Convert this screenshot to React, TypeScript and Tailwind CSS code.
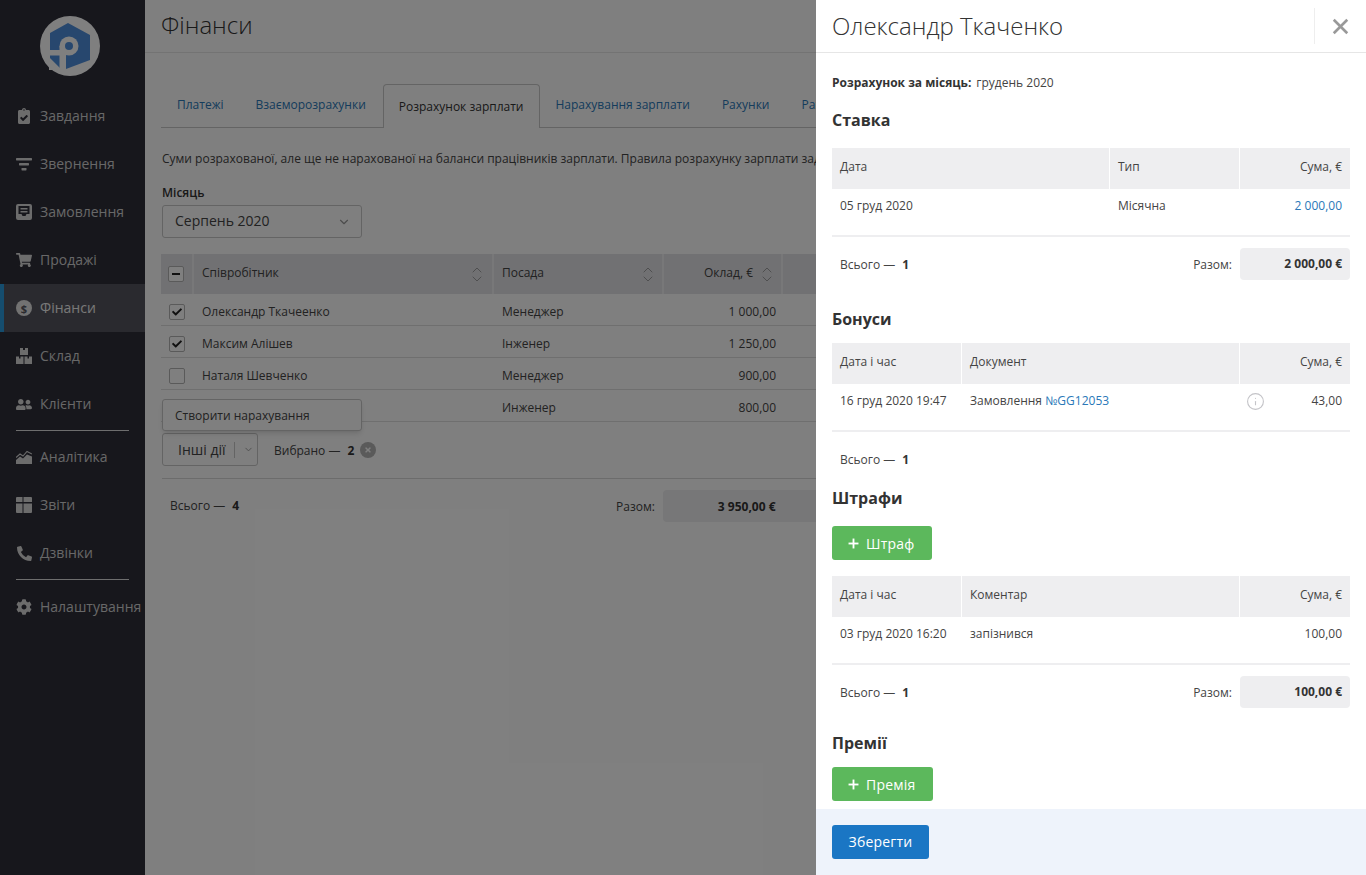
import React from "react";
import { FaCheck, FaClipboardCheck, FaCog, FaPhoneAlt, FaShoppingCart, FaTimes, FaUserFriends } from "react-icons/fa";
import { ChevronDown, ChevronUp, Info, Plus, X } from "lucide-react";

const font = "font-['Open_Sans','Noto_Sans',sans-serif]";

// Drawn icons: the icon sets have nothing close for these
function FunnelIcon() {
  return (
    <svg width="16" height="16" viewBox="0 0 16 16" fill="currentColor">
      <rect x="0" y="2" width="16" height="2.4" rx="0.6" />
      <rect x="3" y="7" width="10" height="2.4" rx="0.6" />
      <rect x="5.5" y="12" width="5" height="2.4" rx="0.6" />
    </svg>
  );
}

function TrayIcon() {
  return (
    <svg width="16" height="16" viewBox="0 0 16 16" fill="currentColor">
      <path
        fillRule="evenodd"
        d="M2 0h12a2 2 0 0 1 2 2v12a2 2 0 0 1-2 2H2a2 2 0 0 1-2-2V2a2 2 0 0 1 2-2zm.5 2v8h3l1 2h3l1-2h3V2h-11zM4.500 4h7v1.500h-7V4zm0 3h7v1.500h-7V7z"
      />
    </svg>
  );
}

function BoxesIcon() {
  return (
    <svg width="16" height="16" viewBox="0 0 16 16" fill="currentColor">
      <path
        fillRule="evenodd"
        d="M4 0h8v7H4V0zm3 0v2h2V0H7zM0 8.500h7.500V16H0V8.500zm3 0v2h1.500v-2H3zM8.500 8.500H16V16H8.500V8.500zm3 0v2H13v-2h-1.500z"
      />
    </svg>
  );
}

function AreaIcon() {
  return (
    <svg width="16" height="16" viewBox="0 0 16 16" fill="currentColor">
      <path d="M0 15V11l4-3.500 3 2 4-4 5 2V15H0z" />
      <path d="M0 8.500l4-3.500 3 2 4-4.500 5 2.500" fill="none" stroke="currentColor" strokeWidth="1.100" />
    </svg>
  );
}

function GridIcon() {
  return (
    <svg width="16" height="16" viewBox="0 0 16 16" fill="currentColor">
      <path d="M1 0h5.500v5H0V1a1 1 0 0 1 1-1zM7.500 0H15a1 1 0 0 1 1 1v4H7.500V0zM0 6.500h6.500V16H1a1 1 0 0 1-1-1V6.500zM7.500 6.500H16V15a1 1 0 0 1-1 1H7.500V6.500z" />
    </svg>
  );
}

function DollarBadge() {
  return (
    <span className="flex h-4 w-4 items-center justify-center rounded-full bg-[#e4e4e4] text-[11px] leading-none font-bold text-[#55555e]">
      $
    </span>
  );
}

function Logo() {
  return (
    <svg width="60" height="60" viewBox="0 0 60 60">
      <circle cx="30" cy="30" r="30" fill="#ffffff" />
      <path d="M28 7l22 12v25L26 53H20L10 47V17z" fill="#4f8fdc" />
      <path d="M9 34h11v5.500H9zM9 41l11 11v2H9z" fill="#ffffff" />
      <circle cx="29" cy="30" r="9.500" fill="#ffffff" />
      <rect x="19.500" y="30" width="6.500" height="24" fill="#ffffff" />
      <circle cx="29" cy="30" r="4" fill="#4f8fdc" />
    </svg>
  );
}

const navTop = [
  { label: "Завдання", icon: <FaClipboardCheck size={16} /> },
  { label: "Звернення", icon: <FunnelIcon /> },
  { label: "Замовлення", icon: <TrayIcon /> },
  { label: "Продажі", icon: <FaShoppingCart size={16} /> },
  { label: "Фінанси", icon: <DollarBadge />, active: true },
  { label: "Склад", icon: <BoxesIcon /> },
  { label: "Клієнти", icon: <FaUserFriends size={17} /> },
];

const navMiddle = [
  { label: "Аналітика", icon: <AreaIcon /> },
  { label: "Звіти", icon: <GridIcon /> },
  { label: "Дзвінки", icon: <FaPhoneAlt size={15} /> },
];

function NavItem({ label, icon, active }: { label: string; icon: React.ReactNode; active?: boolean }) {
  return (
    <div
      className={`flex h-12 items-center border-l-4 pl-3 text-[14px] whitespace-nowrap ${
        active ? "border-[#2a9bdc] bg-[#55555e] text-[#f0f0f0]" : "border-transparent text-[#d0d0d0]"
      }`}
    >
      <span className="flex w-4 justify-center text-[#d8d8d8]">{icon}</span>
      <span className="ml-2 pb-[2px]">{label}</span>
    </div>
  );
}

function Sidebar() {
  return (
    <aside className="h-full w-[145px] shrink-0 bg-[#2e2e38]">
      <div className="h-[92px] pt-4 pl-10">
        <Logo />
      </div>
      {navTop.map((item) => (
        <NavItem key={item.label} {...item} />
      ))}
      <div className="mx-4 mt-[2px] mb-[2px] h-px bg-[#dcdcdc]" />
      {navMiddle.map((item) => (
        <NavItem key={item.label} {...item} />
      ))}
      <div className="mx-4 mt-[2px] mb-[3px] h-px bg-[#dcdcdc]" />
      <NavItem label="Налаштування" icon={<FaCog size={16} />} />
    </aside>
  );
}

function SortIcon() {
  return (
    <span className="flex flex-col items-center text-[#9a9a9a]">
      <ChevronUp size={16} strokeWidth={1.4} className="-mb-1" />
      <ChevronDown size={16} strokeWidth={1.4} className="-mt-[3px]" />
    </span>
  );
}

function Checkbox({ state }: { state?: "on" | "mixed" }) {
  return (
    <span className="flex h-4 w-4 items-center justify-center rounded-[2px] border border-[#b5b5b5] bg-white text-[#222]">
      {state === "on" && <FaCheck size={10} />}
      {state === "mixed" && <span className="h-[2px] w-2 bg-[#222]" />}
    </span>
  );
}

const tabs = ["Платежі", "Взаєморозрахунки", "Розрахунок зарплати", "Нарахування зарплати", "Рахунки", "Рахунки-фактури"];

const employees = [
  { name: "Олександр Ткачеенко", role: "Менеджер", pay: "1 000,00", state: "on" as const },
  { name: "Максим Алішев", role: "Інженер", pay: "1 250,00", state: "on" as const },
  { name: "Наталя Шевченко", role: "Менеджер", pay: "900,00" },
  { name: "", role: "Инженер", pay: "800,00", hidden: true },
];

function FinancePage() {
  return (
    <main className="relative h-full min-w-0 flex-1 overflow-hidden bg-white text-[12px] text-[#444]">
      <div className="flex h-[53px] items-center border-b border-[#e6e6e6] pl-4">
        <h1 className="pb-[3px] text-[24px] font-light text-[#333]">Фінанси</h1>
      </div>

      <div className="mt-[31px] ml-4 flex h-11 w-[1300px] items-end border-b border-[#c9c9c9]">
        {tabs.map((tab) => (
          <div
            key={tab}
            className={
              tab === "Розрахунок зарплати"
                ? "-mb-px ml-px flex h-11 items-center rounded-t-[4px] border border-b-0 border-[#c9c9c9] bg-white px-[15px] text-[#333] whitespace-nowrap"
                : "flex h-11 items-center px-4 text-[#2a78b8] whitespace-nowrap"
            }
          >
            {tab}
          </div>
        ))}
      </div>

      <p className="mt-[22px] ml-[17px] w-[1200px] leading-[18px] whitespace-nowrap">
        Суми розрахованої, але ще не нарахованої на баланси працівників зарплати. Правила розрахунку зарплати задаються в налаштуваннях.
      </p>

      <div className="mt-4 ml-[17px] leading-[18px] font-semibold text-[#333]">Місяць</div>
      <div className="mt-[3px] ml-[17px] flex h-[33px] w-[200px] items-center justify-between rounded-[3px] border border-[#c9c9c9] pr-[10px] pl-3 text-[14px] text-[#444]">
        <span className="pb-[2px]">Серпень 2020</span>
        <ChevronDown size={14} className="text-[#999]" />
      </div>

      <div className="mt-4 ml-4 w-[1200px]">
        <div className="flex h-10 items-stretch bg-[#e2e2e6] text-[#444]">
          <div className="flex w-[33px] items-center justify-center border-r-2 border-white/50 pr-px">
            <Checkbox state="mixed" />
          </div>
          <div className="flex w-[300px] items-center justify-between border-r-2 border-white/50 pr-[7px] pl-2">
            <span className="pb-[2px]">Співробітник</span>
            <SortIcon />
          </div>
          <div className="flex w-[170px] items-center justify-between border-r-2 border-white/50 pr-[6px] pl-2">
            <span className="pb-[2px]">Посада</span>
            <SortIcon />
          </div>
          <div className="flex w-[119px] items-center justify-end gap-[6px] border-r-2 border-white/50 pr-[6px]">
            <span className="pb-[2px]">Оклад, €</span>
            <SortIcon />
          </div>
        </div>
        {employees.map((row, i) => (
          <div key={i} className="flex h-8 items-center border-b border-[#dedede] pt-1 first:mt-[1px]">
            <div className="flex w-[33px] justify-center pr-px">{!row.hidden && <Checkbox state={row.state} />}</div>
            <div className="w-[300px] pl-2">{row.name}</div>
            <div className="w-[170px] pl-2">{row.role}</div>
            <div className="w-[119px] pr-[7px] text-right">{row.pay}</div>
          </div>
        ))}
      </div>

      <div className="absolute top-[399px] left-[17px] flex h-8 w-[200px] items-center rounded-[3px] border border-[#c9c9c9] bg-white pt-[2px] pl-3 shadow-md">
        Створити нарахування
      </div>

      <div className="mt-[11px] ml-[17px] flex items-center">
        <div className="flex h-[33px] w-[96px] items-center rounded-[3px] border border-[#c9c9c9] pl-[15px] text-[14px]">
          Інші дії
          <span className="mx-[8px] h-4 w-px bg-[#c9c9c9]" />
          <ChevronDown size={11} className="text-[#999]" />
        </div>
        <span className="ml-4 pt-[2px]">Вибрано —</span>
        <b className="ml-[7px] pt-[2px] font-bold text-[#333]">2</b>
        <span className="ml-[6px] flex h-4 w-4 items-center justify-center rounded-full bg-[#b4b4b4] text-white">
          <FaTimes size={8} />
        </span>
      </div>

      <div className="mt-[12px] ml-[17px] w-[1200px] border-t border-[#d8d8d8] pt-[11px]">
        <div className="flex h-8 items-center pl-2">
          <div className="w-[446px] pb-[1px]">
            <span>Всього —</span>
            <b className="ml-[7px] font-bold text-[#333]">4</b>
          </div>
          <span className="pt-[2px]">Разом:</span>
          <div className="ml-2 flex h-8 w-[400px] items-center rounded-[4px] bg-[#eeeef0] pt-[2px] pl-[55px] font-bold text-[#333]">3 950,00 €</div>
        </div>
      </div>
    </main>
  );
}

type Cell = React.ReactNode;

function DetailTable({ columns, head, row }: { columns: string[]; head: string[]; row: Cell[] }) {
  return (
    <div>
      <div className="flex h-[41px] gap-[1px]">
        {head.map((title, i) => (
          <div
            key={title}
            className={`${columns[i]} flex items-center bg-[#eeeef0] px-2 pb-[3px] ${i === head.length - 1 ? "justify-end" : ""}`}
          >
            {title}
          </div>
        ))}
      </div>
      <div className="flex h-[46px] gap-[1px] pt-2 leading-[18px]">
        {row.map((cell, i) => (
          <div key={i} className={`${columns[i]} px-2 ${i === row.length - 1 ? "text-right" : ""}`}>
            {cell}
          </div>
        ))}
      </div>
      <div className="h-[2px] bg-[#eeeef0]" />
    </div>
  );
}

function Totals({ count, sum }: { count: number; sum?: string }) {
  return (
    <div className="mt-[11px] flex h-8 items-center pl-2">
      <span className="pt-[2px]">Всього —</span>
      <b className="ml-[7px] pt-[2px] font-bold text-[#333]">{count}</b>
      {sum && (
        <>
          <span className="mr-2 ml-auto pt-[2px]">Разом:</span>
          <div className="flex h-8 w-[110px] items-center justify-end rounded-[4px] bg-[#eeeef0] px-2 font-bold text-[#333]">{sum}</div>
        </>
      )}
    </div>
  );
}

function AddButton({ label, width }: { label: string; width: string }) {
  return (
    <div className={`${width} flex h-[34px] items-center gap-1 rounded-[3px] bg-[#5cb85c] pl-[13px] text-[14px] font-medium tracking-[0.2px] text-white`}>
      <Plus size={17} strokeWidth={2.600} strokeLinecap="butt" />
      {label}
    </div>
  );
}

const wideDate = ["w-[277px]", "w-[129px]", "w-[110px]"];
const narrowDate = ["w-[129px]", "w-[277px]", "w-[110px]"];

function SalaryDrawer() {
  return (
    <aside className="absolute top-0 right-0 bottom-0 flex w-[550px] flex-col bg-white text-[12px] text-[#444]">
      <div className="flex h-[53px] shrink-0 items-center justify-between border-b border-[#e6e6e6]">
        <h2 className="pb-[1px] pl-4 text-[24px] font-light text-[#333]">Олександр Ткаченко</h2>
        <div className="flex h-9 w-[52px] items-center justify-center border-l border-[#eeeeee] text-[#999]">
          <X size={27} strokeWidth={2.300} strokeLinecap="butt" />
        </div>
      </div>

      <div className="min-h-0 flex-1 overflow-hidden px-4">
        <div className="mt-[21px] leading-[18px]">
          <b className="font-bold text-[#333]">Розрахунок за місяць:</b>
          <span className="ml-[5px]">грудень 2020</span>
        </div>

        <h3 className="mt-4 mb-4 text-[16px] leading-6 font-bold text-[#333]">Ставка</h3>
        <DetailTable
          columns={wideDate}
          head={["Дата", "Тип", "Сума, €"]}
          row={["05 груд 2020", "Місячна", <span className="text-[#2a78b8]">2 000,00</span>]}
        />
        <Totals count={1} sum="2 000,00 €" />

        <h3 className="mt-[27px] mb-3 text-[16px] leading-6 font-bold text-[#333]">Бонуси</h3>
        <DetailTable
          columns={narrowDate}
          head={["Дата і час", "Документ", "Сума, €"]}
          row={[
            "16 груд 2020 19:47",
            <>
              Замовлення <span className="text-[#2a78b8]">№GG12053</span>
            </>,
            <span className="flex items-center justify-between">
              <Info size={19} strokeWidth={1.400} className="-my-px -ml-[2px] text-[#c4c4c8]" />
              43,00
            </span>,
          ]}
        />
        <Totals count={1} />

        <h3 className="mt-[11px] mb-4 text-[16px] leading-6 font-bold text-[#333]">Штрафи</h3>
        <AddButton label="Штраф" width="w-[100px]" />
        <div className="h-4" />
        <DetailTable
          columns={narrowDate}
          head={["Дата і час", "Коментар", "Сума, €"]}
          row={["03 груд 2020 16:20", "запізнився", "100,00"]}
        />
        <Totals count={1} sum="100,00 €" />

        <h3 className="mt-[23px] mb-3 text-[16px] leading-6 font-bold text-[#333]">Премії</h3>
        <AddButton label="Премія" width="w-[101px]" />
      </div>

      <div className="flex h-[66px] shrink-0 items-center bg-[#eef3fb] pl-4">
        <div className="flex h-[34px] w-[97px] items-center justify-center rounded-[3px] bg-[#1a76c4] pb-[2px] text-[14px] font-medium tracking-[0.2px] text-white">
          Зберегти
        </div>
      </div>
    </aside>
  );
}

export default function App() {
  return (
    <div className={`${font} relative flex h-[875px] w-full overflow-hidden`}>
      <Sidebar />
      <FinancePage />
      <div className="absolute inset-0 bg-black/50" />
      <SalaryDrawer />
    </div>
  );
}
